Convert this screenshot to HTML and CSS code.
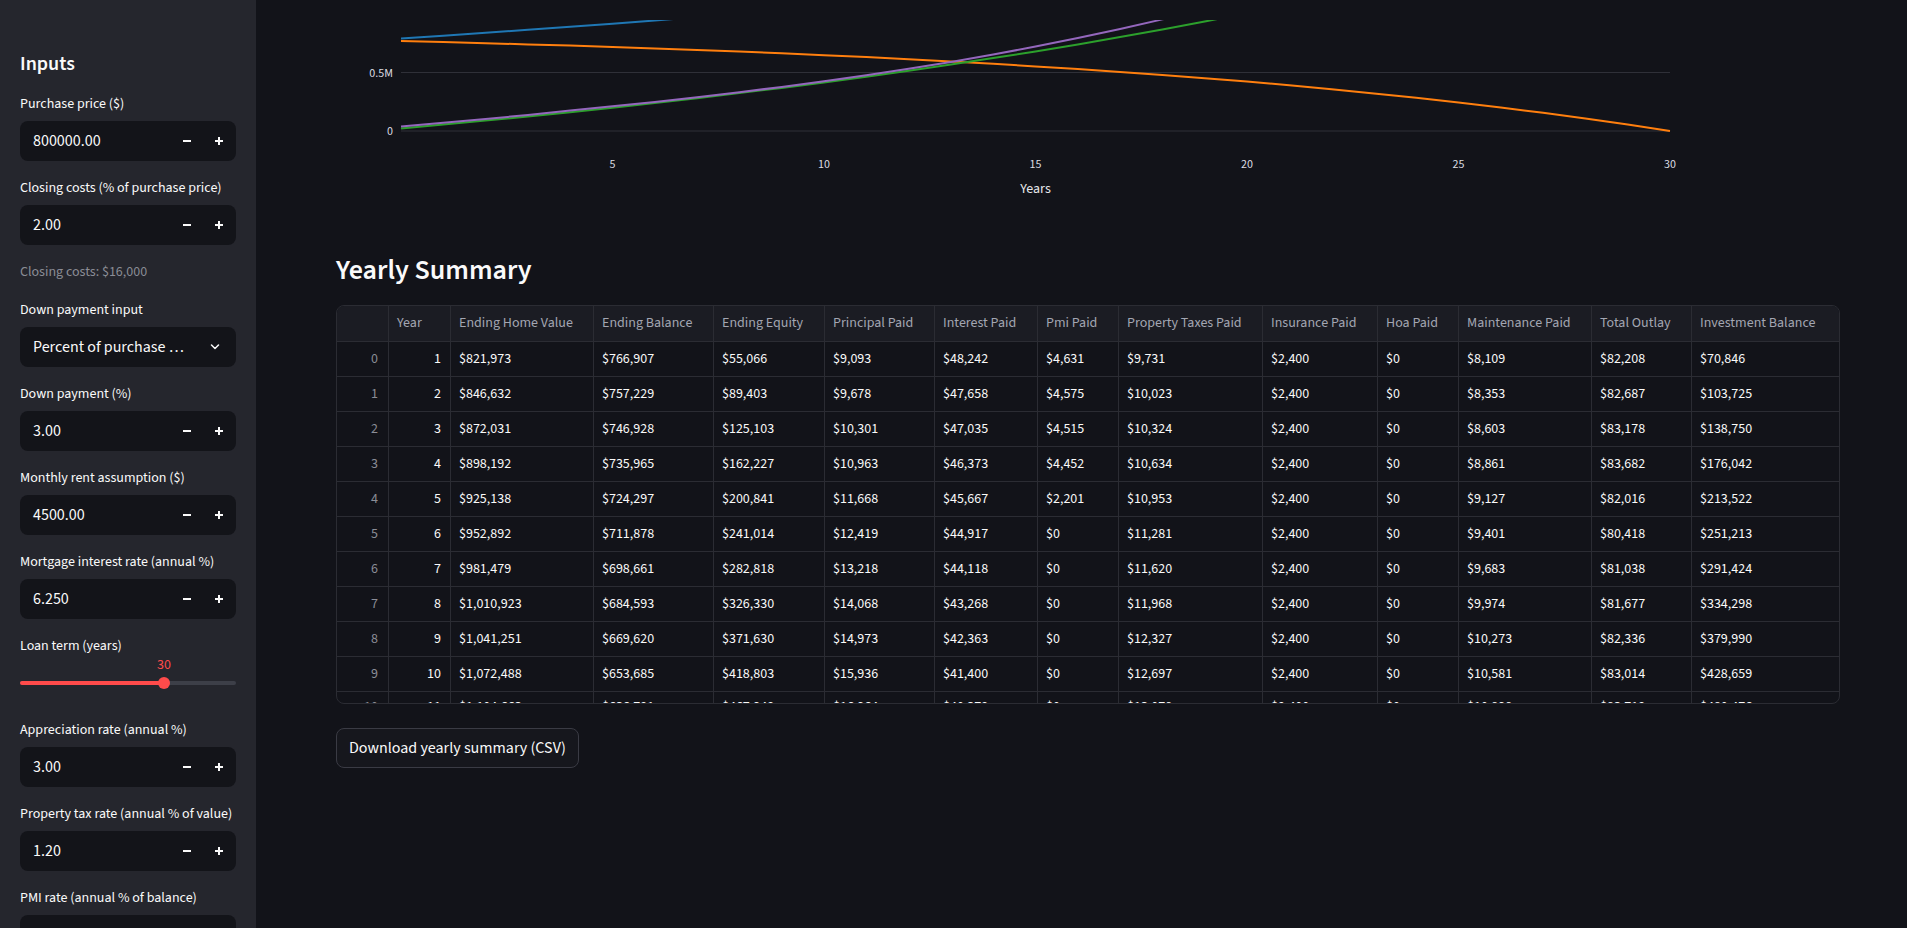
FILE: index.html
```html
<!DOCTYPE html>
<html lang="en">
<head>
<meta charset="utf-8">
<title>Rent vs Buy</title>
<link rel="stylesheet" href="styles.css">
</head>
<body>
<div class="app">
  <aside class="sidebar">
    <h2 class="sb-title">Inputs</h2>

    <div class="widget">
      <label class="w-label">Purchase price ($)</label>
      <div class="num-input"><span class="num-value">800000.00</span><span class="step"><svg width="10" height="10" viewBox="0 0 10 10"><rect x="1" y="4" width="8" height="2" fill="currentColor"/></svg></span><span class="step last"><svg width="10" height="10" viewBox="0 0 10 10"><rect x="1" y="4" width="8" height="2" fill="currentColor"/><rect x="4" y="1" width="2" height="8" fill="currentColor"/></svg></span></div>
    </div>

    <div class="widget">
      <label class="w-label">Closing costs (% of purchase price)</label>
      <div class="num-input"><span class="num-value">2.00</span><span class="step"><svg width="10" height="10" viewBox="0 0 10 10"><rect x="1" y="4" width="8" height="2" fill="currentColor"/></svg></span><span class="step last"><svg width="10" height="10" viewBox="0 0 10 10"><rect x="1" y="4" width="8" height="2" fill="currentColor"/><rect x="4" y="1" width="2" height="8" fill="currentColor"/></svg></span></div>
    </div>

    <p class="caption">Closing costs: $16,000</p>

    <div class="widget">
      <label class="w-label">Down payment input</label>
      <div class="select"><span class="select-value">Percent of purchase price</span><svg class="chev" width="10" height="6" viewBox="0 0 10 6"><path d="M1.5 1 L5 4.5 L8.5 1" fill="none" stroke="currentColor" stroke-width="1.5" stroke-linecap="round" stroke-linejoin="round"/></svg></div>
    </div>

    <div class="widget">
      <label class="w-label">Down payment (%)</label>
      <div class="num-input"><span class="num-value">3.00</span><span class="step"><svg width="10" height="10" viewBox="0 0 10 10"><rect x="1" y="4" width="8" height="2" fill="currentColor"/></svg></span><span class="step last"><svg width="10" height="10" viewBox="0 0 10 10"><rect x="1" y="4" width="8" height="2" fill="currentColor"/><rect x="4" y="1" width="2" height="8" fill="currentColor"/></svg></span></div>
    </div>

    <div class="widget">
      <label class="w-label">Monthly rent assumption ($)</label>
      <div class="num-input"><span class="num-value">4500.00</span><span class="step"><svg width="10" height="10" viewBox="0 0 10 10"><rect x="1" y="4" width="8" height="2" fill="currentColor"/></svg></span><span class="step last"><svg width="10" height="10" viewBox="0 0 10 10"><rect x="1" y="4" width="8" height="2" fill="currentColor"/><rect x="4" y="1" width="2" height="8" fill="currentColor"/></svg></span></div>
    </div>

    <div class="widget">
      <label class="w-label">Mortgage interest rate (annual %)</label>
      <div class="num-input"><span class="num-value">6.250</span><span class="step"><svg width="10" height="10" viewBox="0 0 10 10"><rect x="1" y="4" width="8" height="2" fill="currentColor"/></svg></span><span class="step last"><svg width="10" height="10" viewBox="0 0 10 10"><rect x="1" y="4" width="8" height="2" fill="currentColor"/><rect x="4" y="1" width="2" height="8" fill="currentColor"/></svg></span></div>
    </div>

    <div class="widget">
      <label class="w-label">Loan term (years)</label>
      <div class="slider">
        <div class="track">
          <div class="fill" style="width: 66.67%">
            <span class="slider-value">30</span>
            <span class="thumb"></span>
          </div>
        </div>
      </div>
    </div>

    <div class="widget">
      <label class="w-label">Appreciation rate (annual %)</label>
      <div class="num-input"><span class="num-value">3.00</span><span class="step"><svg width="10" height="10" viewBox="0 0 10 10"><rect x="1" y="4" width="8" height="2" fill="currentColor"/></svg></span><span class="step last"><svg width="10" height="10" viewBox="0 0 10 10"><rect x="1" y="4" width="8" height="2" fill="currentColor"/><rect x="4" y="1" width="2" height="8" fill="currentColor"/></svg></span></div>
    </div>

    <div class="widget">
      <label class="w-label">Property tax rate (annual % of value)</label>
      <div class="num-input"><span class="num-value">1.20</span><span class="step"><svg width="10" height="10" viewBox="0 0 10 10"><rect x="1" y="4" width="8" height="2" fill="currentColor"/></svg></span><span class="step last"><svg width="10" height="10" viewBox="0 0 10 10"><rect x="1" y="4" width="8" height="2" fill="currentColor"/><rect x="4" y="1" width="2" height="8" fill="currentColor"/></svg></span></div>
    </div>

    <div class="widget">
      <label class="w-label">PMI rate (annual % of balance)</label>
      <div class="num-input"><span class="num-value">0.50</span><span class="step"><svg width="10" height="10" viewBox="0 0 10 10"><rect x="1" y="4" width="8" height="2" fill="currentColor"/></svg></span><span class="step last"><svg width="10" height="10" viewBox="0 0 10 10"><rect x="1" y="4" width="8" height="2" fill="currentColor"/><rect x="4" y="1" width="2" height="8" fill="currentColor"/></svg></span></div>
    </div>
  </aside>

  <main class="main">
    <div class="chart">
      <svg width="1504" height="236" viewBox="0 0 1504 236">
        <defs><clipPath id="plot"><rect x="60" y="20" width="1290" height="180"/></clipPath></defs>
        <line class="grid" x1="65" y1="72.5" x2="1334" y2="72.5"/>
        <line class="grid" x1="65" y1="131" x2="1334" y2="131"/>
        <text class="tick" x="57" y="77" text-anchor="end">0.5M</text>
        <text class="tick" x="57" y="135" text-anchor="end">0</text>
        <text class="tick" x="276.5" y="168" text-anchor="middle">5</text>
        <text class="tick" x="488" y="168" text-anchor="middle">10</text>
        <text class="tick" x="699.5" y="168" text-anchor="middle">15</text>
        <text class="tick" x="911" y="168" text-anchor="middle">20</text>
        <text class="tick" x="1122.5" y="168" text-anchor="middle">25</text>
        <text class="tick" x="1334" y="168" text-anchor="middle">30</text>
        <text class="axis-title" x="699.5" y="192.5" text-anchor="middle">Years</text>
        <g clip-path="url(#plot)" fill="none" stroke-width="2" stroke-linejoin="round">
          <polyline stroke="#1f77b4" points="65,38.4 107.3,35.7 149.6,32.8 191.9,29.8 234.2,26.8 276.5,23.7 318.8,20.5 361.1,17.1"/>
          <polyline stroke="#ff7f0e" points="65,41.0 107.3,42.0 149.6,43.2 191.9,44.4 234.2,45.6 276.5,47.0 318.8,48.4 361.1,50.0 403.4,51.6 445.7,53.3 488,55.2 530.3,57.1 572.6,59.2 614.9,61.5 657.2,63.8 699.5,66.4 741.8,69.0 784.1,71.9 826.4,75.0 868.7,78.2 911,81.6 953.3,85.3 995.6,89.2 1037.9,93.4 1080.2,97.8 1122.5,102.5 1164.8,107.5 1207.1,112.8 1249.4,118.5 1291.7,124.6 1334,131"/>
          <polyline stroke="#2ca02c" points="65,128.4 107.3,124.6 149.6,120.6 191.9,116.5 234.2,112.2 276.5,107.7 318.8,103.0 361.1,98.2 403.4,93.1 445.7,87.9 488,82.4 530.3,76.7 572.6,70.8 614.9,64.6 657.2,58.1 699.5,51.4 741.8,44.4 784.1,37.1 826.4,29.5 868.7,21.5 911,13.2"/>
          <polyline stroke="#9467bd" points="65,126.4 107.3,122.8 149.6,119.0 191.9,114.9 234.2,110.6 276.5,106.2 318.8,101.9 361.1,97.2 403.4,92.2 445.7,86.9 488,81.3 530.3,75.2 572.6,68.8 614.9,61.9 657.2,54.5 699.5,46.6 741.8,38.1 784.1,29.1 826.4,19.4 868.7,9.5"/>
        </g>
      </svg>
    </div>

    <h3 class="section-title">Yearly Summary</h3>

    <div class="table-wrap">
      <table class="grid-table">
        <colgroup>
          <col class="c-idx"><col class="c-year"><col class="c-ehv"><col class="c-eb"><col class="c-ee"><col class="c-pp"><col class="c-ip"><col class="c-pmi"><col class="c-ptp"><col class="c-ins"><col class="c-hoa"><col class="c-mp"><col class="c-to"><col class="c-ib">
        </colgroup>
        <thead>
          <tr><th></th><th>Year</th><th>Ending Home Value</th><th>Ending Balance</th><th>Ending Equity</th><th>Principal Paid</th><th>Interest Paid</th><th>Pmi Paid</th><th>Property Taxes Paid</th><th>Insurance Paid</th><th>Hoa Paid</th><th>Maintenance Paid</th><th>Total Outlay</th><th>Investment Balance</th></tr>
        </thead>
        <tbody>
          <tr><td class="idx">0</td><td class="num">1</td><td>$821,973</td><td>$766,907</td><td>$55,066</td><td>$9,093</td><td>$48,242</td><td>$4,631</td><td>$9,731</td><td>$2,400</td><td>$0</td><td>$8,109</td><td>$82,208</td><td>$70,846</td></tr>
          <tr><td class="idx">1</td><td class="num">2</td><td>$846,632</td><td>$757,229</td><td>$89,403</td><td>$9,678</td><td>$47,658</td><td>$4,575</td><td>$10,023</td><td>$2,400</td><td>$0</td><td>$8,353</td><td>$82,687</td><td>$103,725</td></tr>
          <tr><td class="idx">2</td><td class="num">3</td><td>$872,031</td><td>$746,928</td><td>$125,103</td><td>$10,301</td><td>$47,035</td><td>$4,515</td><td>$10,324</td><td>$2,400</td><td>$0</td><td>$8,603</td><td>$83,178</td><td>$138,750</td></tr>
          <tr><td class="idx">3</td><td class="num">4</td><td>$898,192</td><td>$735,965</td><td>$162,227</td><td>$10,963</td><td>$46,373</td><td>$4,452</td><td>$10,634</td><td>$2,400</td><td>$0</td><td>$8,861</td><td>$83,682</td><td>$176,042</td></tr>
          <tr><td class="idx">4</td><td class="num">5</td><td>$925,138</td><td>$724,297</td><td>$200,841</td><td>$11,668</td><td>$45,667</td><td>$2,201</td><td>$10,953</td><td>$2,400</td><td>$0</td><td>$9,127</td><td>$82,016</td><td>$213,522</td></tr>
          <tr><td class="idx">5</td><td class="num">6</td><td>$952,892</td><td>$711,878</td><td>$241,014</td><td>$12,419</td><td>$44,917</td><td>$0</td><td>$11,281</td><td>$2,400</td><td>$0</td><td>$9,401</td><td>$80,418</td><td>$251,213</td></tr>
          <tr><td class="idx">6</td><td class="num">7</td><td>$981,479</td><td>$698,661</td><td>$282,818</td><td>$13,218</td><td>$44,118</td><td>$0</td><td>$11,620</td><td>$2,400</td><td>$0</td><td>$9,683</td><td>$81,038</td><td>$291,424</td></tr>
          <tr><td class="idx">7</td><td class="num">8</td><td>$1,010,923</td><td>$684,593</td><td>$326,330</td><td>$14,068</td><td>$43,268</td><td>$0</td><td>$11,968</td><td>$2,400</td><td>$0</td><td>$9,974</td><td>$81,677</td><td>$334,298</td></tr>
          <tr><td class="idx">8</td><td class="num">9</td><td>$1,041,251</td><td>$669,620</td><td>$371,630</td><td>$14,973</td><td>$42,363</td><td>$0</td><td>$12,327</td><td>$2,400</td><td>$0</td><td>$10,273</td><td>$82,336</td><td>$379,990</td></tr>
          <tr><td class="idx">9</td><td class="num">10</td><td>$1,072,488</td><td>$653,685</td><td>$418,803</td><td>$15,936</td><td>$41,400</td><td>$0</td><td>$12,697</td><td>$2,400</td><td>$0</td><td>$10,581</td><td>$83,014</td><td>$428,659</td></tr>
          <tr class="peek"><td class="idx">10</td><td class="num">11</td><td>$1,104,663</td><td>$636,721</td><td>$467,942</td><td>$16,964</td><td>$40,372</td><td>$0</td><td>$13,078</td><td>$2,400</td><td>$0</td><td>$10,898</td><td>$83,712</td><td>$480,476</td></tr>
        </tbody>
      </table>
    </div>

    <button type="button" class="dl-btn">Download yearly summary (CSV)</button>
  </main>
</div>
</body>
</html>
```

FILE: styles.css
```css
html, body {
  margin: 0;
  height: 100%;
}

body {
  background: #121319;
  color: #fafafa;
  font-family: "Source Sans Pro", "Source Sans 3", Lato, sans-serif;
  overflow: hidden;
}

.app {
  display: flex;
  height: 928px;
}

/* ---------- sidebar ---------- */
.sidebar {
  width: 256px;
  flex: none;
  box-sizing: border-box;
  background: #25262d;
  padding: 50px 20px 0;
  display: flex;
  flex-direction: column;
  gap: 16px;
  overflow: hidden;
}

.sb-title {
  margin: 0;
  font-size: 20px;
  line-height: 27px;
  font-weight: 600;
  position: relative;
  top: 1px;
}

.widget {
  display: flex;
  flex-direction: column;
  flex: none;
}

.w-label {
  font-size: 14px;
  line-height: 22px;
  margin-bottom: 6px;
  color: #fafafa;
  white-space: nowrap;
}

.num-input {
  height: 40px;
  border-radius: 8px;
  background: #131419;
  display: flex;
  align-items: center;
  padding-left: 13px;
}

.num-value {
  flex: 1;
  font-size: 16px;
}

.step {
  width: 32px;
  height: 40px;
  display: flex;
  align-items: center;
  justify-content: center;
  color: #fafafa;
}

.step.last {
  margin-right: 1px;
}

.caption {
  margin: 0;
  font-size: 14px;
  line-height: 22px;
  color: #8b8d96;
}

.select {
  height: 40px;
  border-radius: 8px;
  background: #131419;
  display: flex;
  align-items: center;
  padding: 0 16px 0 13px;
}

.select-value {
  width: 156px;
  white-space: nowrap;
  overflow: hidden;
  text-overflow: ellipsis;
  font-size: 16px;
}

.chev {
  margin-left: auto;
  color: #fafafa;
}

.slider {
  height: 40px;
  display: flex;
  align-items: center;
}

.track {
  flex: 1;
  height: 4px;
  border-radius: 2px;
  background: #3d3f48;
}

.fill {
  position: relative;
  height: 100%;
  border-radius: 2px;
  background: #ff4b4b;
}

.thumb {
  position: absolute;
  right: -6px;
  top: -4px;
  width: 12px;
  height: 12px;
  border-radius: 50%;
  background: #ff4b4b;
}

.slider-value {
  position: absolute;
  right: 0;
  top: -24px;
  transform: translateX(50%);
  font-size: 14px;
  line-height: 16px;
  color: #ff4b4b;
}

/* ---------- main ---------- */
.main {
  flex: 1;
  min-width: 0;
  padding: 0 67px 0 80px;
  display: flex;
  flex-direction: column;
  gap: 16px;
  overflow: hidden;
}

.chart {
  height: 236px;
  flex: none;
}

.chart svg {
  display: block;
}

.grid {
  stroke: #2f3038;
  stroke-width: 1;
}

.tick {
  fill: #dcdde2;
  font-size: 12px;
  font-family: "Source Sans Pro", "Source Sans 3", Lato, sans-serif;
}

.axis-title {
  fill: #e6e7ea;
  font-size: 14px;
  font-family: "Source Sans Pro", "Source Sans 3", Lato, sans-serif;
}

.section-title {
  margin: 0;
  font-size: 28px;
  line-height: 37px;
  font-weight: 600;
  flex: none;
}

.table-wrap {
  flex: none;
  height: 399px;
  box-sizing: border-box;
  border: 1px solid #2b2c33;
  border-radius: 8px;
  overflow: hidden;
}

.grid-table {
  width: 100%;
  table-layout: fixed;
  border-collapse: separate;
  border-spacing: 0;
  font-size: 14px;
}

.grid-table th,
.grid-table td {
  padding: 0 8px;
  border-right: 1px solid #2b2c33;
  border-bottom: 1px solid #2b2c33;
  white-space: nowrap;
  overflow: hidden;
  text-align: left;
  font-weight: 400;
}

.grid-table th {
  line-height: 35px;
  background: #1b1c23;
  color: #a3a6b2;
}

.grid-table td {
  line-height: 34px;
  color: #fafafa;
}

.grid-table .peek td {
  line-height: 31px;
  vertical-align: top;
}

.grid-table th:last-child,
.grid-table td:last-child {
  border-right: 0;
}

.grid-table td.idx {
  text-align: right;
  color: #8b8d96;
  padding-right: 10px;
}

.grid-table td.num {
  text-align: right;
  padding-right: 9px;
}

.c-idx { width: 52px; }
.c-year { width: 62px; }
.c-ehv { width: 143px; }
.c-eb { width: 120px; }
.c-ee { width: 111px; }
.c-pp { width: 110px; }
.c-ip { width: 103px; }
.c-pmi { width: 81px; }
.c-ptp { width: 144px; }
.c-ins { width: 115px; }
.c-hoa { width: 81px; }
.c-mp { width: 133px; }
.c-to { width: 100px; }
.c-ib { width: auto; }

.dl-btn {
  align-self: flex-start;
  margin-top: 8px;
  height: 40px;
  padding: 0 12px;
  border: 1px solid #3a3b44;
  border-radius: 8px;
  background: #16171d;
  color: #fafafa;
  font-family: "Source Sans Pro", "Source Sans 3", Lato, sans-serif;
  font-size: 16px;
  flex: none;
}
```
